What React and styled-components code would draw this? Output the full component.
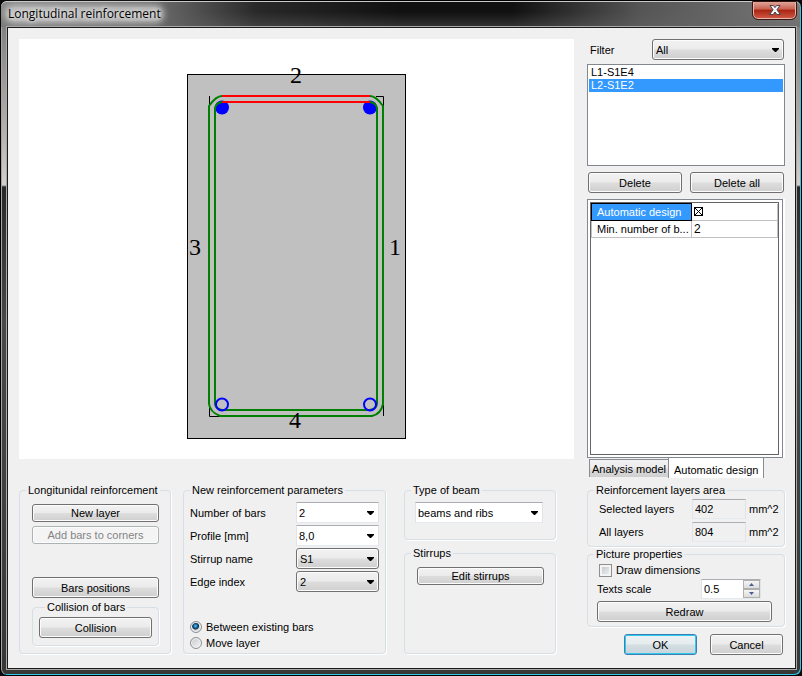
import { useState } from "react";
import styled, { createGlobalStyle, css } from "styled-components";

const LAYERS = ["L1-S1E4", "L2-S1E2"];

const Combo = ({ id, options, flat }) => (
  <StCombo>
    <StSelect id={id} $flat={flat} defaultValue={options[0]}>
      {options.map((option) => <option key={option}>{option}</option>)}
    </StSelect>
    <StArrow width="7" height="4" viewBox="0 0 7 4" aria-hidden="true">
      <path d="M0 0H7V1L4 4H3L0 1Z" fill="#000" />
    </StArrow>
  </StCombo>
);

const Titlebar = () => (
  <StTitlebar>
    <StTitle>Longitudinal reinforcement</StTitle>
    <StClose type="button" aria-label="Close">
      <svg width="12" height="10" viewBox="0 0 12 10" aria-hidden="true">
        <path
          d="M1 .5H4.3L6 2.6L7.7 .5H11L8 4.7L11.3 9.5H7.8L6 7L4.2 9.5H.7L4 4.7Z"
          fill="#f4f4f4"
          stroke="#45414d"
          strokeWidth="1"
        />
      </svg>
    </StClose>
  </StTitlebar>
);

const BeamSection = () => (
  <StCanvas>
    <svg width="221" height="384" viewBox="186 55 221 384" role="img" aria-label="Beam cross-section">
      <rect x="187.5" y="74.5" width="218" height="364" fill="#c0c0c0" stroke="#000" />
      <path
        d="M209.5 96V106M376 96.5H383.5V106M209.5 405V416.5H221M383.5 405V416"
        fill="none"
        stroke="#000"
      />
      <g fill="#00f">
        <circle cx="222" cy="107.5" r="7" />
        <circle cx="370" cy="107.5" r="7" />
      </g>
      <g fill="none" stroke="#008000" strokeWidth="2">
        <path d="M222 96Q216 96 209 106V404Q210 412 220 416H372Q381 414 383 404V106Q376 96 370 96" />
        <path d="M222 102Q216 103 215 108V404Q216 409 222 410H370Q376 409 377 404V108Q376 103 370 102" />
      </g>
      <path d="M222 96H370M222 102H370" stroke="#f00" strokeWidth="2" />
      <g fill="none" stroke="#00f" strokeWidth="2">
        <circle cx="222" cy="404.5" r="6" />
        <circle cx="370" cy="404.5" r="6" />
      </g>
      <g fontFamily="'Liberation Serif', serif" fontSize="24" textAnchor="middle">
        <text x="296" y="83">2</text>
        <text x="395" y="255">1</text>
        <text x="195" y="255">3</text>
        <text x="295" y="428">4</text>
      </g>
    </svg>
  </StCanvas>
);

const LayerButtons = () => (
  <StGroup>
    <legend>Longitunidal reinforcement</legend>
    <StLayerButtons>
      <StButton type="button" $small>New layer</StButton>
      <StButton type="button" $small disabled>Add bars to corners</StButton>
      <StSpacer />
      <StButton type="button">Bars positions</StButton>
      <StInnerGroup>
        <legend>Collision of bars</legend>
        <StButton type="button">Collision</StButton>
      </StInnerGroup>
    </StLayerButtons>
  </StGroup>
);

const NewParameters = () => {
  const [mode, setMode] = useState("between");

  return (
    <StGroup>
      <legend>New reinforcement parameters</legend>
      <StParams>
        <label htmlFor="bars">Number of bars</label>
        <Combo id="bars" options={["2", "3", "4"]} flat />
        <label htmlFor="profile">Profile [mm]</label>
        <Combo id="profile" options={["8,0", "10,0", "12,0"]} flat />
        <label htmlFor="stirrup">Stirrup name</label>
        <Combo id="stirrup" options={["S1"]} />
        <label htmlFor="edge">Edge index</label>
        <Combo id="edge" options={["2", "1", "3", "4"]} />
      </StParams>
      <StRadios>
        <StRadioLabel>
          <StRadio name="mode" checked={mode === "between"} onChange={() => setMode("between")} />
          Between existing bars
        </StRadioLabel>
        <StRadioLabel>
          <StRadio name="mode" checked={mode === "move"} onChange={() => setMode("move")} />
          Move layer
        </StRadioLabel>
      </StRadios>
    </StGroup>
  );
};

const BeamType = () => (
  <StBeamColumn>
    <StGroup>
      <legend><label htmlFor="beam">Type of beam</label></legend>
      <StBeamBody>
        <Combo id="beam" options={["beams and ribs", "columns"]} flat />
      </StBeamBody>
    </StGroup>
    <StGroup>
      <legend>Stirrups</legend>
      <StLayerButtons>
        <StButton type="button" $small>Edit stirrups</StButton>
      </StLayerButtons>
    </StGroup>
  </StBeamColumn>
);

const Properties = () => (
  <StPropertyPanel>
    <StPropertyFrame>
      <StTable>
        <tbody>
          <tr>
            <StNameCell $selected><label htmlFor="auto">Automatic design</label></StNameCell>
            <td><StCross id="auto" defaultChecked /></td>
          </tr>
          <tr>
            <StNameCell>Min. number of b...</StNameCell>
            <td>2</td>
          </tr>
        </tbody>
      </StTable>
    </StPropertyFrame>
  </StPropertyPanel>
);

const SidePanel = () => {
  const [layer, setLayer] = useState(LAYERS[1]);
  const [scale, setScale] = useState("0.5");
  const step = (amount) => setScale((Number(scale) + amount).toFixed(1));

  return (
    <StSide>
      <StFilter>
        <label htmlFor="filter">Filter</label>
        <Combo id="filter" options={["All"]} />
      </StFilter>
      <StList size="7" aria-label="Layers" value={layer} onChange={(e) => setLayer(e.target.value)}>
        {LAYERS.map((name) => <option key={name}>{name}</option>)}
      </StList>
      <StDeleteRow>
        <StButton type="button">Delete</StButton>
        <StButton type="button">Delete all</StButton>
      </StDeleteRow>
      <Properties />
      <StTabs role="tablist">
        <StTab type="button" role="tab" aria-selected="false">Analysis model</StTab>
        <StTab type="button" role="tab" aria-selected="true" $active>Automatic design</StTab>
      </StTabs>
      <StGroup>
        <legend>Reinforcement layers area</legend>
        <StArea>
          <label htmlFor="selected">Selected layers</label>
          <StReadout id="selected" readOnly value="402" />
          <span>mm^2</span>
          <label htmlFor="all">All layers</label>
          <StReadout id="all" readOnly value="804" />
          <span>mm^2</span>
        </StArea>
      </StGroup>
      <StGroup>
        <legend>Picture properties</legend>
        <StPicture>
          <StCheckLabel>
            <StCheckbox />
            Draw dimensions
          </StCheckLabel>
          <StScaleRow>
            <label htmlFor="scale">Texts scale</label>
            <StSpin>
              <input id="scale" value={scale} onChange={(e) => setScale(e.target.value)} />
              <StSteps>
                <button type="button" aria-label="Increase" onClick={() => step(0.1)}>
                  <svg width="5" height="3" viewBox="0 0 5 3"><path d="M0 3L2.5 0L5 3Z" fill="#4b5d97" /></svg>
                </button>
                <button type="button" aria-label="Decrease" onClick={() => step(-0.1)}>
                  <svg width="5" height="3" viewBox="0 0 5 3"><path d="M0 0L2.5 3L5 0Z" fill="#4b5d97" /></svg>
                </button>
              </StSteps>
            </StSpin>
          </StScaleRow>
          <StButton type="button">Redraw</StButton>
        </StPicture>
      </StGroup>
      <StDialogButtons>
        <StButton type="button" $primary>OK</StButton>
        <StButton type="button">Cancel</StButton>
      </StDialogButtons>
    </StSide>
  );
};

const App = () => (
  <>
    <GlobalStyle />
    <StWindow>
      <Titlebar />
      <StClient>
        <StMain>
          <BeamSection />
          <StGroups>
            <LayerButtons />
            <NewParameters />
            <BeamType />
          </StGroups>
        </StMain>
        <SidePanel />
      </StClient>
    </StWindow>
  </>
);

export default App;


const GlobalStyle = createGlobalStyle`
  * {
    box-sizing: border-box;
  }
  body {
    margin: 0;
    background: #0b0b0d;
    color: #000;
    font: 11px/14px "Liberation Sans", Arial, sans-serif;
  }
  button, input, select {
    margin: 0;
    color: inherit;
    font: inherit;
  }
`;

const StWindow = styled.div`
  display: flex;
  flex-direction: column;
  min-height: 100vh;
  padding: 0 4px 5px;
  border: 1px solid #000;
  border-radius: 7px;
  box-shadow: inset -1px -1px 0 #2fc6ec, inset 1px 0 0 #a5a5a5;
  background: linear-gradient(#777 0, #b5b0ae 130px, #d2cfcd 184px, #2b2927 186px, #4b4948 320px, #393735 100%);
`;
const StTitlebar = styled.header`
  display: flex;
  align-items: flex-start;
  justify-content: space-between;
  height: 26px;
  margin: 0 -3px 0 -4px;
  padding: 0 4px 0 7px;
  border-top: 1px solid #c9c9c9;
  border-radius: 6px 6px 0 0;
  background:
    linear-gradient(#0000 40%, #6666),
    linear-gradient(90deg, #888 0, #686868 20%, #292929 32%, #111 50%, #111 64%, #555 80%, #777 100%);
`;
const StTitle = styled.h1`
  margin: 5px 0 0;
  border-radius: 6px;
  box-shadow: 0 0 6px 3px #ccca;
  background: #ccca;
  font: 12px/14px "Open Sans", "Noto Sans", sans-serif;
  text-shadow: 0 0 4px #fff, 0 0 8px #fff;
`;
const StClose = styled.button`
  display: grid;
  place-items: center;
  width: 43px;
  height: 17px;
  padding: 0;
  border: 1px solid #e9b5ac;
  border-top: none;
  border-radius: 0 0 5px 5px;
  outline: 1px solid #3b1713;
  background: linear-gradient(#e0a499, #c8604f 45%, #a92411 50%, #cd5642);
`;
const StClient = styled.main`
  display: grid;
  grid-template-columns: minmax(0, 1fr) 198px;
  column-gap: 13px;
  flex: 1;
  margin: 0 1px 1px 2px;
  padding: 11px 10px 11px 11px;
  border: 1px solid #1b1b1b;
  outline: 1px solid #aaa;
  background: #f0f0f0;
`;
const StMain = styled.div`
  display: flex;
  flex-direction: column;
  gap: 24px;
`;
const StCanvas = styled.div`
  display: flex;
  justify-content: center;
  height: 420px;
  padding-top: 16px;
  background: #fff;
`;
const StGroups = styled.div`
  display: grid;
  grid-template-columns: 152fr 203fr 158fr;
  gap: 12px;
  padding-right: 18px;
`;
const StGroup = styled.fieldset`
  min-width: 0;
  margin: 0;
  padding: 0;
  border: 1px solid #d5dfe5;
  border-radius: 4px;
  box-shadow: 1px 1px 0 #fff;
  legend {
    margin-left: 6px;
    padding: 0 2px;
  }
`;
const StInnerGroup = styled(StGroup)`
  display: grid;
  margin-top: -2px;
  padding: 3px 6px 7px;
`;
const StLayerButtons = styled.div`
  display: flex;
  flex-direction: column;
  gap: 4px;
  padding: 7px 11px 7px 12px;
`;
const StSpacer = styled.div`
  height: 25px;
`;
const StParams = styled.div`
  display: grid;
  grid-template-columns: 1fr 83px;
  gap: 2px;
  align-items: center;
  padding: 5px 6px 0;
`;
const StRadios = styled.div`
  display: flex;
  flex-direction: column;
  padding: 27px 6px 0;
`;
const StBeamColumn = styled.div`
  display: grid;
  grid-template-rows: 57px 1fr;
  gap: 6px;
  padding-left: 6px;
`;
const StBeamBody = styled.div`
  padding: 5px 12px 0 10px;
`;

const raised = css`
  border: 1px solid #707070;
  border-radius: 3px;
  box-shadow: inset 0 0 0 1px #fcfcfc;
  background: linear-gradient(#f2f2f2, #ebebeb 48%, #dddddd 52%, #cfcfcf);
`;
const StButton = styled.button`
  height: ${({ $small }) => ($small ? 18 : 21)}px;
  padding: 0 4px;
  ${raised}
  &:disabled {
    border-color: #adb2b5;
    background: #f4f4f4;
    color: #838383;
  }
  ${({ $primary }) => $primary && css`
    border-color: #3c7fb1;
    box-shadow: inset 0 0 0 1px #2fc9f0;
    background: linear-gradient(#eef2f3, #e5ecee 48%, #d2dee2 52%, #c9d5da);
  `}
`;
const StCombo = styled.div`
  display: grid;
  align-items: center;
`;
const StSelect = styled.select`
  grid-area: 1 / 1;
  width: 100%;
  height: 21px;
  padding: 0 18px 0 3px;
  appearance: none;
  ${raised}
  ${({ $flat }) => $flat && css`
    padding-left: 2px;
    border-color: #abadb3 #e2e3ea #e3e9ef;
    border-radius: 0;
    box-shadow: none;
    background: #fff;
  `}
`;
const StArrow = styled.svg`
  grid-area: 1 / 1;
  justify-self: end;
  margin-right: 5px;
  pointer-events: none;
`;
const StRadioLabel = styled.label`
  display: flex;
  align-items: center;
  gap: 4px;
  height: 16px;
`;
const StRadio = styled.input.attrs({ type: "radio" })`
  width: 12px;
  height: 12px;
  appearance: none;
  border: 1px solid #8e8f8f;
  border-radius: 50%;
  box-shadow: inset 0 0 0 1px #f4f4f4;
  background: linear-gradient(135deg, #c5c9cd, #f6f6f6);
  &:checked {
    background: radial-gradient(circle at 45% 40%, #5cc8f0 0, #14649a 2px, #0b2b46 3px, #cfd8de 4px);
  }
`;

const StSide = styled.aside`
  display: flex;
  flex-direction: column;
`;
const StFilter = styled.div`
  display: grid;
  grid-template-columns: 62px 1fr;
  align-items: center;
  padding: 0 1px 0 3px;
`;
const StList = styled.select`
  height: 102px;
  margin: 4px 0 6px;
  padding: 1px;
  border: 1px solid #828790;
  border-radius: 0;
  outline: none;
  background: #fff;
  overflow: hidden;
  option {
    min-height: 13px;
    padding: 0 2px;
    line-height: 13px;
  }
  option:checked {
    background: #39f linear-gradient(#39f, #39f);
    color: #fff;
    -webkit-text-fill-color: #fff;
  }
`;
const StDeleteRow = styled.div`
  display: grid;
  grid-template-columns: 1fr 1fr;
  gap: 8px;
  padding: 0 1px;
`;
const StPropertyPanel = styled.div`
  display: flex;
  height: 259px;
  margin: 6px 2px 0 0;
  padding: 2px 3px 2px 2px;
  border: 1px solid #828790;
  box-shadow: 2px 0 0 #fff;
  background: #fff;
`;
const StPropertyFrame = styled.div`
  flex: 1;
  border: 1px solid #646464;
`;
const StTable = styled.table`
  width: 100%;
  table-layout: fixed;
  border-collapse: collapse;
  td, th {
    height: 17px;
    padding: 0 2px;
    border: 1px solid #c0c0c0;
    border-top: none;
    line-height: 14px;
    text-align: left;
    vertical-align: middle;
  }
  td {
    font-size: 12px;
  }
`;
const StNameCell = styled.th.attrs({ scope: "row" })`
  width: 100px;
  font-weight: normal;
  white-space: nowrap;
  && {
    padding-left: 5px;
    ${({ $selected }) => $selected && css`
      border: 1px solid #000;
      background: #39f;
      color: #fff;
    `}
  }
`;
const StCross = styled.input.attrs({ type: "checkbox" })`
  display: block;
  width: 9px;
  height: 9px;
  appearance: none;
  border: 1px solid #000;
  &:checked {
    background:
      linear-gradient(45deg, transparent 44%, #000 44% 56%, transparent 56%),
      linear-gradient(135deg, transparent 44%, #000 44% 56%, transparent 56%);
  }
`;
const StTabs = styled.div`
  display: flex;
  align-items: flex-start;
  height: 25px;
  padding-left: 2px;
`;
const StTab = styled.button`
  height: 18px;
  margin-top: 1px;
  padding: 0 2px;
  border: 1px solid #898c95;
  border-width: 1px 0 0 1px;
  background: linear-gradient(#f2f2f2, #ebebeb 48%, #dddddd 52%, #cfcfcf);
  white-space: nowrap;
  ${({ $active }) => $active && css`
    height: 20px;
    margin-top: 0;
    padding: 3px 5px 0;
    border-width: 0 1px;
    background: #fff;
  `}
`;
const StArea = styled.div`
  display: grid;
  grid-template-columns: 1fr 54px 35px;
  gap: 3px;
  align-items: center;
  padding: 2px 0 4px 11px;
`;
const StReadout = styled.input`
  width: 100%;
  height: 20px;
  padding: 0 2px;
  border: 1px solid;
  border-color: #abadb3 #e2e3ea #e3e9ef;
  background: #f0f0f0;
`;
const StPicture = styled.div`
  display: flex;
  flex-direction: column;
  gap: 2px;
  padding: 2px 12px 4px 9px;
`;
const StCheckLabel = styled.label`
  display: flex;
  align-items: center;
  gap: 4px;
  height: 14px;
  padding-left: 2px;
`;
const StCheckbox = styled.input.attrs({ type: "checkbox" })`
  width: 13px;
  height: 13px;
  appearance: none;
  border: 1px solid #8e8f8f;
  box-shadow: inset 0 0 0 2px #f4f4f4;
  background: linear-gradient(135deg, #bfc5ca, #f3f3f3);
  &:checked {
    background: #215e9b;
  }
`;
const StScaleRow = styled.div`
  display: flex;
  align-items: center;
  justify-content: space-between;
  padding-right: 11px;
`;
const StSpin = styled.div`
  display: flex;
  width: 60px;
  height: 20px;
  border: 1px solid;
  border-color: #abadb3 #e2e3ea #e3e9ef;
  background: #fff;
  input {
    flex: 1;
    min-width: 0;
    padding: 0 2px;
    border: none;
    background: transparent;
  }
`;
const StSteps = styled.div`
  display: grid;
  grid-template-rows: 1fr 1fr;
  width: 17px;
  button {
    display: grid;
    place-items: center;
    min-height: 0;
    padding: 0;
    border: 1px solid #b0b0b0;
    background: linear-gradient(#f5f5f5, #dcdcdc);
  }
`;
const StDialogButtons = styled.div`
  display: flex;
  justify-content: flex-end;
  gap: 13px;
  padding: 7px 2px 0 0;
  ${StButton} {
    width: 73px;
  }
`;
